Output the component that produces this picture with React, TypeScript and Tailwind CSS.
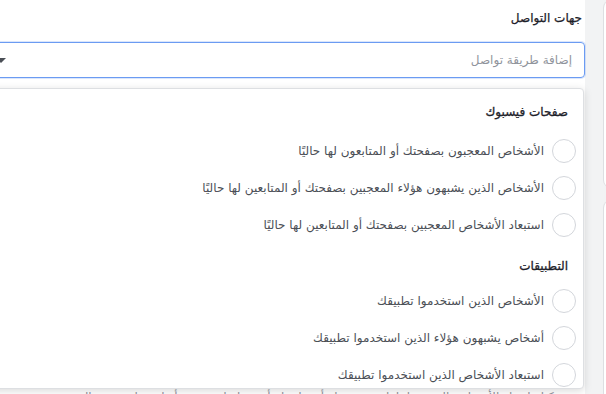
import React from "react";

const font = { fontFamily: '"DejaVu Sans", "Liberation Sans", sans-serif' };

function Radio({ label }: { label: string }) {
  return (
    <div className="flex h-[37px] items-center gap-[8px] pr-[7px]">
      <div className="h-[24px] w-[24px] shrink-0 rounded-full border border-[#d3d6db] bg-white" />
      <div className="whitespace-nowrap text-[12px] text-[#4b4f56]">{label}</div>
    </div>
  );
}

export default function App() {
  return (
    <div
      className="relative flex h-[394px] w-[606px] overflow-hidden bg-white"
      style={font}
    >
      <div dir="rtl" className="relative -ml-[12px] flex w-[597px] shrink-0 flex-col">
        <div className="shrink-0 pr-[3px] pt-[10px] text-[12px] font-normal leading-[16px] text-[#1d2129] [-webkit-text-stroke:0.25px_#1d2129]">
          جهات التواصل
        </div>
        <div className="mt-[16px] flex h-[36px] shrink-0 items-center justify-between rounded-[4px] border border-[#6b9bf2] pl-[7px] pr-[12px] shadow-[0_0_0_1px_rgba(107,155,242,0.25)]">
          <span className="text-[12px] text-[#90949c]">إضافة طريقة تواصل</span>
          <span className="h-0 w-0 border-x-[5px] border-t-[5px] border-x-transparent border-t-[#4b4f56]" />
        </div>
        <div className="mt-[312px] shrink-0 whitespace-nowrap pr-[20px] text-[12px] leading-[14px] text-[#90949c]">
          يمكنك اختيار الأشخاص الذين تفاعلوا مع صفحتك أو تطبيقك أو حدثك لتضمينهم أو استبعادهم من الجمهور
        </div>

        <div className="absolute left-0 right-[1px] top-[88px] h-[301px] overflow-hidden rounded-[4px] border border-[#dddfe2] bg-white shadow-[0_2px_8px_rgba(0,0,0,0.15)]">
          <div className="pt-[15px]">
            <div className="h-[16px] pr-[15px] text-[12px] leading-[16px] text-[#1d2129] [-webkit-text-stroke:0.3px_#1d2129]">
              صفحات فيسبوك
            </div>
            <div className="mt-[12px]">
              <Radio label="الأشخاص المعجبون بصفحتك أو المتابعون لها حاليًا" />
              <Radio label="الأشخاص الذين يشبهون هؤلاء المعجبين بصفحتك أو المتابعين لها حاليًا" />
              <Radio label="استبعاد الأشخاص المعجبين بصفحتك أو المتابعين لها حاليًا" />
            </div>
            <div className="mt-[15px] h-[16px] pr-[15px] text-[12px] leading-[16px] text-[#1d2129] [-webkit-text-stroke:0.3px_#1d2129]">
              التطبيقات
            </div>
            <div className="mt-[8px]">
              <Radio label="الأشخاص الذين استخدموا تطبيقك" />
              <Radio label="أشخاص يشبهون هؤلاء الذين استخدموا تطبيقك" />
              <Radio label="استبعاد الأشخاص الذين استخدموا تطبيقك" />
            </div>
          </div>
        </div>
      </div>

      <div className="flex w-[21px] shrink-0 flex-col bg-[#f2f3f4]">
        <div className="ml-[18px] h-[188px] w-[14px] shrink-0 rounded-l-[8px] border-l border-[#dddfe2] bg-white" />
        <div className="ml-[18px] mt-[12px] h-[300px] w-[14px] shrink-0 rounded-l-[8px] border-l border-[#dddfe2] bg-white" />
      </div>
    </div>
  );
}
